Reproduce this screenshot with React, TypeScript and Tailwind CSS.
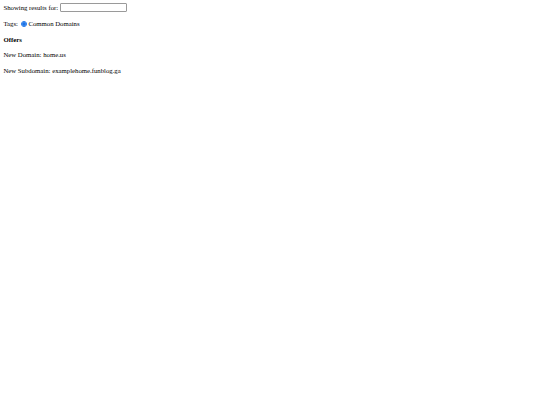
export default function App() {
  return (
    <div
      className="min-h-[405px] w-[540px] bg-white p-[3.4px] text-[6.75px] leading-none text-black"
      style={{ fontFamily: '"Liberation Serif", serif' }}
    >
      <div className="flex flex-col gap-[6.8px]">
        <div className="flex h-[9px] items-center">
          <span>Showing results for:</span>
          <input
            type="text"
            className="ml-[2px] h-[9px] w-[67px] rounded-[1px] border border-[#9a9a9a] bg-white"
          />
        </div>
        <div className="flex h-[9px] items-center pt-[1px]">
          <span>Tags:</span>
          <span className="ml-[3.5px] mr-[1.5px] flex h-[5.5px] w-[5.5px] items-center justify-center rounded-full border-[0.6px] border-[#1a73e8] bg-white">
            <span className="h-[3.6px] w-[3.6px] rounded-full bg-[#1a73e8]" />
          </span>
          <span>Common Domains</span>
        </div>
        <div className="flex h-[9px] items-center pt-[1px] font-bold">Offers</div>
        <div className="flex h-[9px] items-center pt-[1px]">New Domain: home.us</div>
        <div className="flex h-[9px] items-center">New Subdomain: examplehome.funblog.ga</div>
      </div>
    </div>
  );
}
